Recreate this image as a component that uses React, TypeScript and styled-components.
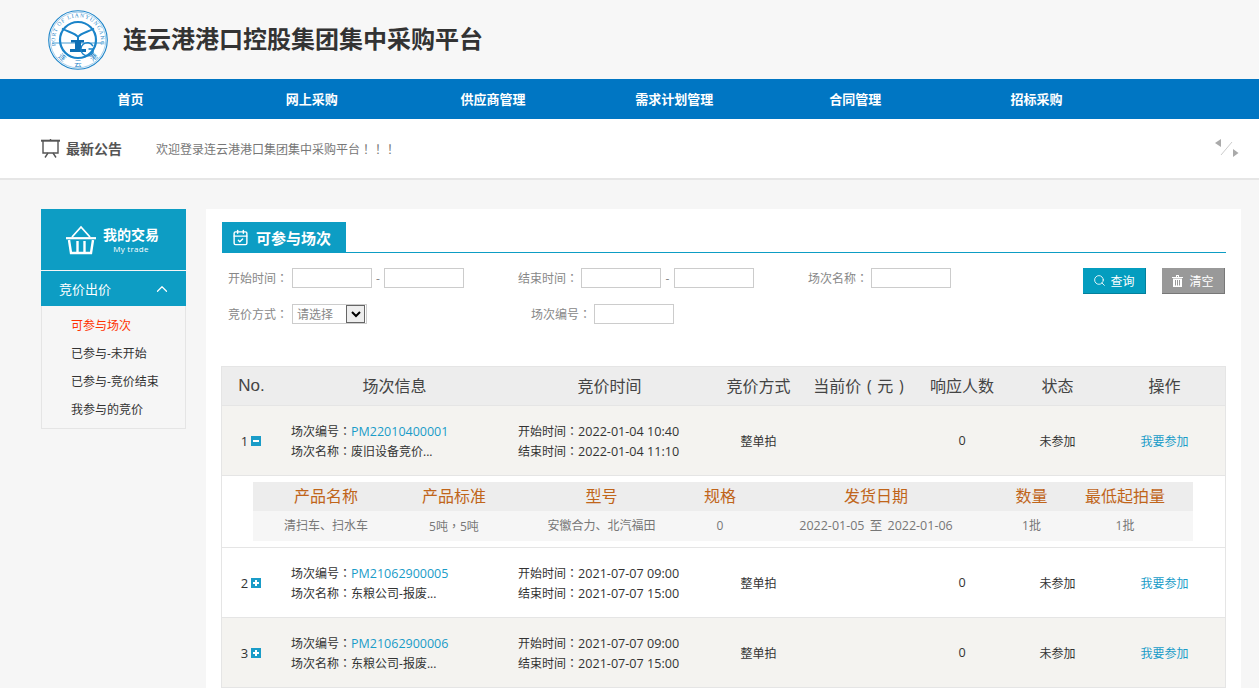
import React from 'react'
import styled, { createGlobalStyle } from 'styled-components'
import { CalendarCheck, ChevronUp, Search } from 'lucide-react'

const FONT = `"Open Sans", "Noto Sans CJK SC", sans-serif`

const GlobalStyle = createGlobalStyle`
	html, body {
		margin: 0;
		padding: 0;
		height: 100%;
		overflow: hidden;
		background: #f6f6f6;
		font-family: ${FONT};
		font-size: 12px;
		color: #333;
	}
	* {
		box-sizing: border-box;
	}
`

const NAV = ['首页', '网上采购', '供应商管理', '需求计划管理', '合同管理', '招标采购']
const MENU = ['可参与场次', '已参与-未开始', '已参与-竞价结束', '我参与的竞价']

const ROWS = [
	{ no: 1, code: 'PM22010400001', name: '废旧设备竞价...', start: '2022-01-04 10:40', end: '2022-01-04 11:10', open: true, shaded: true },
	{ no: 2, code: 'PM21062900005', name: '东粮公司-报废...', start: '2021-07-07 09:00', end: '2021-07-07 15:00', open: false, shaded: false },
	{ no: 3, code: 'PM21062900006', name: '东粮公司-报废...', start: '2021-07-07 09:00', end: '2021-07-07 15:00', open: false, shaded: true },
]

function Logo() {
	const c = '#1b84c9'
	return (
		<svg width='60' height='60' viewBox='0 0 60 60'>
			<defs>
				<path id='logoTop' d='M8.3 37 A22.8 22.8 0 1 1 51.7 37' />
			</defs>
			<circle cx='30' cy='30' r='29.3' fill='#fff' stroke={c} strokeWidth='1.1' />
			<circle cx='30' cy='30' r='27.8' fill='none' stroke={c} strokeWidth='0.4' />
			<text fontSize='5.6' fill={c} fontFamily='"Liberation Serif", serif' letterSpacing='0.9'>
				<textPath href='#logoTop' startOffset='50%' textAnchor='middle'>
					PORT OF LIANYUNGANG
				</textPath>
			</text>
			<LogoChar x='30' y='56' transform='rotate(42 30 30)'>连</LogoChar>
			<LogoChar x='30' y='56'>云</LogoChar>
			<LogoChar x='30' y='56' transform='rotate(-42 30 30)'>港</LogoChar>
			<circle cx='30' cy='30' r='18' fill='none' stroke={c} strokeWidth='2.2' />
			<rect x='4' y='32.6' width='52' height='0.8' fill={c} />
			<path d='M14 18.5 C20 22 27 23 30 27 C33 23 40 22 46 18.5' fill='none' stroke={c} strokeWidth='2' />
			<path d='M30 26 V30' stroke={c} strokeWidth='2' />
			<path d='M23 30 H36 V32.5 H33 V39 H38 V42 H22 V39 H27 V32.5 H23 Z' fill='#0f6fb4' />
			<path d='M45 36 A6.5 6.5 0 1 0 45 42.5 V39 H40.5' fill='none' stroke={c} strokeWidth='1.5' />
		</svg>
	)
}

function BoardIcon() {
	return (
		<svg width='19' height='19' viewBox='0 0 19 19' fill='none' stroke='#555' strokeWidth='1.4'>
			<path d='M0 1.7 H19' strokeWidth='2' />
			<path d='M2 2 V14 H17 V2' />
			<path d='M9.5 0 V2 M7 14 L4 18.5 M12 14 L15 18.5' />
		</svg>
	)
}

function PagerIcon() {
	return (
		<svg width='24' height='19' viewBox='0 0 24 19'>
			<path d='M6 0 V8 L0 4 Z M18 10 V18 L23.5 14 Z' fill='#aaa' />
			<path d='M17 3 L6 16' stroke='#ccc' strokeWidth='1' />
		</svg>
	)
}

function BasketIcon() {
	return (
		<svg width='30' height='30' viewBox='0 0 30 30' fill='none' stroke='#fff'>
			<path d='M6 12 L15 2 L24 12' strokeWidth='1.8' />
			<path d='M0 13.2 H30' strokeWidth='2.2' />
			<path d='M3 15 L5 28 H25 L27 15' strokeWidth='2.4' />
			<path d='M11.5 16 V27 M18.5 16 V27' strokeWidth='2.4' />
		</svg>
	)
}

function TrashIcon() {
	return (
		<svg width='11' height='12' viewBox='0 0 11 12' fill='#fff'>
			<path d='M0 2 H11 V3 H0 Z M4 0 H7 V2 H6 V1 H5 V2 H4 Z' />
			<path d='M1 3.5 H10 V12 H1 Z M3 5 V10.5 H4 V5 Z M5 5 V10.5 H6 V5 Z M7 5 V10.5 H8 V5 Z' fillRule='evenodd' />
		</svg>
	)
}

export default function App() {
	return (
		<Page>
			<GlobalStyle />
			<Header>
				<Logo />
				<Title>连云港港口控股集团集中采购平台</Title>
			</Header>
			<Nav>
				{NAV.map(item => (
					<NavItem key={item}>{item}</NavItem>
				))}
			</Nav>
			<Notice>
				<BoardIcon />
				<NoticeTitle>最新公告</NoticeTitle>
				<NoticeText>
					欢迎登录连云港港口集团集中采购平台<Punct>！！！</Punct>
				</NoticeText>
				<PagerIcon />
			</Notice>
			<Body>
				<Sidebar>
					<SideHead>
						<BasketIcon />
						<SideHeadText>
							<strong>我的交易</strong>
							<small>My trade</small>
						</SideHeadText>
					</SideHead>
					<SideGroup>
						竞价出价
						<ChevronUp size={18} strokeWidth={1.6} />
					</SideGroup>
					<SideMenu>
						{MENU.map((item, i) => (
							<SideItem key={item} $active={i === 0}>
								{item}
							</SideItem>
						))}
					</SideMenu>
				</Sidebar>
				<Panel>
					<TabBar>
						<Tab>
							<CalendarCheck size={17} strokeWidth={2} />
							可参与场次
						</Tab>
					</TabBar>
					<Filters>
						<FilterForm>
							<FilterRow>
								<Field>
									<Label>开始时间<Punct>：</Punct></Label>
									<TextInput />
									<Dash>-</Dash>
									<TextInput />
								</Field>
								<Field>
									<Label>结束时间<Punct>：</Punct></Label>
									<TextInput />
									<Dash>-</Dash>
									<TextInput />
								</Field>
								<Field>
									<Label>场次名称<Punct>：</Punct></Label>
									<TextInput />
								</Field>
							</FilterRow>
							<FilterRow>
								<Field>
									<Label>竞价方式<Punct>：</Punct></Label>
									<SelectBox>
										请选择
										<SelectArrow>
											<svg width='10' height='7' viewBox='0 0 10 7' fill='none' stroke='#000' strokeWidth='2'>
												<path d='M1 1 L5 5 L9 1' />
											</svg>
										</SelectArrow>
									</SelectBox>
								</Field>
								<Field $indent>
									<Label>场次编号<Punct>：</Punct></Label>
									<TextInput />
								</Field>
							</FilterRow>
						</FilterForm>
						<Buttons>
							<ActionButton $tone='#049dbf' $edge='#03809c'>
								<Search size={13} strokeWidth={1.6} />
								查询
							</ActionButton>
							<ActionButton $tone='#999' $edge='#777'>
								<TrashIcon />
								<span>清空</span>
							</ActionButton>
						</Buttons>
					</Filters>
					<Table>
						<HeadRow>
							<NoHead>No.</NoHead>
							<HeadCell>场次信息</HeadCell>
							<HeadCell>竞价时间</HeadCell>
							<HeadCell>竞价方式</HeadCell>
							<PriceHead>当前价 ( 元 )</PriceHead>
							<HeadCell>响应人数</HeadCell>
							<HeadCell>状态</HeadCell>
							<ActionHead>操作</ActionHead>
						</HeadRow>
						{ROWS.map(row => (
							<React.Fragment key={row.no}>
								<Row $shaded={row.shaded}>
									<NoCell>
										{row.no}
										<Toggle $open={row.open} />
									</NoCell>
									<InfoCell>
										<InfoLine>
											场次编号<Punct>：</Punct><CodeLink>{row.code}</CodeLink>
										</InfoLine>
										<InfoLine>
											场次名称<Punct>：</Punct>{row.name}
										</InfoLine>
									</InfoCell>
									<InfoCell>
										<InfoLine>
											开始时间<Punct>：</Punct><Num>{row.start}</Num>
										</InfoLine>
										<InfoLine>
											结束时间<Punct>：</Punct><Num>{row.end}</Num>
										</InfoLine>
									</InfoCell>
									<Cell>整单拍</Cell>
									<Cell />
									<Cell>
										<Num>0</Num>
									</Cell>
									<Cell>未参加</Cell>
									<ActionCell>
										<JoinLink>我要参加</JoinLink>
									</ActionCell>
								</Row>
								{row.open && (
									<DetailWrap>
										<DetailHead>
											<span>产品名称</span>
											<span>产品标准</span>
											<span>型号</span>
											<span>规格</span>
											<span>发货日期</span>
											<span>数量</span>
											<span>最低起拍量</span>
										</DetailHead>
										<DetailBody>
											<span>清扫车、扫水车</span>
											<span>
												5吨<Punct>，</Punct>5吨
											</span>
											<span>安徽合力、北汽福田</span>
											<span>0</span>
											<DateRange>2022-01-05 至 2022-01-06</DateRange>
											<span>1批</span>
											<span>1批</span>
										</DetailBody>
									</DetailWrap>
								)}
							</React.Fragment>
						))}
					</Table>
				</Panel>
			</Body>
		</Page>
	)
}

const Page = styled.div`
	width: 1259px;
`
const LogoChar = styled.text`
	font-family: 'Noto Sans CJK SC', sans-serif;
	font-size: 7.4px;
	text-anchor: middle;
	fill: #1b84c9;
`
const Punct = styled.span`
	font-family: 'Noto Sans CJK TC', sans-serif;
`
const Header = styled.header`
	height: 79px;
	background: #f7f7f7;
	display: flex;
	align-items: center;
	padding-left: 48px;
`
const Title = styled.h1`
	margin: 0 0 2px 15px;
	font-size: 24px;
	line-height: 1;
	font-weight: 700;
	color: #333;
`
const Nav = styled.nav`
	height: 40px;
	background: #0076c3;
	display: flex;
	padding-left: 40px;
`
const NavItem = styled.a`
	width: 181.2px;
	line-height: 40px;
	text-align: center;
	color: #fff;
	font-size: 13px;
	font-weight: 700;
`
const Notice = styled.div`
	height: 61px;
	background: #fff;
	border-bottom: 2px solid #e6e6e6;
	display: flex;
	align-items: center;
	padding: 0 20px 0 41px;
`
const NoticeTitle = styled.span`
	margin: 0 0 2px 6px;
	width: 90px;
	font-size: 14px;
	font-weight: 700;
	color: #555;
`
const NoticeText = styled.span`
	flex: 1;
	font-size: 12px;
	color: #777;
`
const Body = styled.main`
	display: flex;
	align-items: flex-start;
	padding: 29px 18px 0 41px;
`
const Sidebar = styled.aside`
	width: 145px;
	margin-right: 20px;
`
const SideHead = styled.div`
	height: 61px;
	background: #0d9dc4;
	display: flex;
	align-items: center;
	padding-left: 25px;
	color: #fff;
`
const SideHeadText = styled.div`
	margin-left: 7px;
	display: flex;
	flex-direction: column;
	align-items: center;
	strong {
		font-size: 14px;
		line-height: 18px;
	}
	small {
		font-size: 8px;
		line-height: 10px;
		letter-spacing: 0.3px;
	}
`
const SideGroup = styled.div`
	height: 35px;
	margin-top: 1px;
	background: #0d9dc4;
	color: #fff;
	font-size: 13px;
	display: flex;
	align-items: center;
	justify-content: space-between;
	padding: 0 15px 0 18px;
`
const SideMenu = styled.ul`
	margin: 0;
	padding: 6px 0 4px 29px;
	list-style: none;
	background: #f6f6f6;
	border: 1px solid #e5e5e5;
	border-top: 0;
`
const SideItem = styled.li<{ $active: boolean }>`
	height: 28px;
	line-height: 28px;
	font-size: 12px;
	color: ${p => (p.$active ? '#ff3300' : '#333')};
`
const Panel = styled.section`
	width: 1035px;
	height: 480px;
	background: #fff;
	padding: 13px 15px 0;
`
const TabBar = styled.div`
	margin-left: 1px;
	height: 31px;
	border-bottom: 1px solid #0d9dc4;
`
const Tab = styled.div`
	width: 124px;
	height: 30px;
	background: #0d9dc4;
	color: #fff;
	font-size: 15px;
	font-weight: 700;
	display: flex;
	align-items: center;
	gap: 7px;
	padding-left: 10px;
`
const Filters = styled.div`
	display: flex;
	justify-content: space-between;
	padding: 15px 0 0 7px;
	height: 113px;
`
const FilterForm = styled.div`
	display: flex;
	flex-direction: column;
	gap: 16px;
`
const FilterRow = styled.div`
	display: flex;
	height: 20px;
`
const Field = styled.div<{ $indent?: boolean }>`
	width: 290px;
	display: flex;
	align-items: center;
	padding-left: ${p => (p.$indent ? '13px' : '0')};
	&:nth-child(3) {
		width: auto;
	}
`
const Label = styled.label`
	width: 63px;
	font-size: 12px;
	color: #888;
	${Field}:first-child & {
		width: 64px;
	}
`
const TextInput = styled.input`
	width: 80px;
	height: 20px;
	padding: 0;
	background: #fff;
	border: 1px solid #ccc;
`
const Dash = styled.span`
	width: 12px;
	text-align: center;
	color: #888;
	${Field}:nth-child(2) & {
		width: 13px;
	}
`
const SelectBox = styled.div`
	width: 75px;
	height: 20px;
	border: 1px solid #ccc;
	padding-left: 4px;
	font-size: 12px;
	color: #888;
	display: flex;
	align-items: center;
	justify-content: space-between;
`
const SelectArrow = styled.span`
	width: 19px;
	height: 18px;
	margin-right: 1px;
	background: #eee;
	border: 1px solid #666;
	display: flex;
	align-items: center;
	justify-content: center;
`
const Buttons = styled.div`
	display: flex;
	gap: 16px;
	margin-right: 1px;
`
const ActionButton = styled.button<{ $tone: string; $edge: string }>`
	width: 63px;
	height: 26px;
	padding: 0;
	border: 0;
	border-bottom: 1px solid ${p => p.$edge};
	border-right: 1px solid ${p => p.$edge};
	background: ${p => p.$tone};
	color: #fff;
	font-family: ${FONT};
	font-size: 12px;
	display: flex;
	align-items: center;
	justify-content: center;
	gap: 4px;
	span {
		margin-left: 2px;
	}
`
const Table = styled.div`
	width: 1005px;
	border: 1px solid #e5e5e5;
	border-bottom: 0;
`
const COL_WIDTHS = '59px 227px 203px 95px 105px 102px 89px 123px'
const HeadRow = styled.div`
	display: grid;
	grid-template-columns: ${COL_WIDTHS};
	height: 39px;
	padding-bottom: 3px;
	background: #ededed;
	border-bottom: 1px solid #e5e5e5;
`
const HeadCell = styled.div`
	display: flex;
	align-items: center;
	justify-content: center;
	font-size: 16px;
	color: #444;
`
const NoHead = styled(HeadCell)`
	padding-top: 2px;
	font-family: 'Liberation Sans', sans-serif;
	font-size: 17px;
`
const PriceHead = styled(HeadCell)`
	word-spacing: 1.5px;
`
const ActionHead = styled(HeadCell)`
	padding-left: 2px;
`
const Row = styled.div<{ $shaded: boolean }>`
	display: grid;
	grid-template-columns: ${COL_WIDTHS};
	height: 70px;
	background: ${p => (p.$shaded ? '#f4f3f0' : '#fff')};
	border-bottom: 1px solid #e5e5e5;
`
const Cell = styled.div`
	display: flex;
	align-items: center;
	justify-content: center;
	font-size: 12px;
	color: #333;
`
const ActionCell = styled(Cell)`
	padding-left: 2px;
`
const NoCell = styled(Cell)`
	font-size: 13px;
	gap: 3px;
	padding-right: 1px;
`
const Toggle = styled.i<{ $open: boolean }>`
	position: relative;
	width: 10px;
	height: 10px;
	background: #1a9cc8;
	&::before {
		content: '';
		position: absolute;
		left: 2px;
		top: 4px;
		width: 6px;
		height: 2px;
		background: #fff;
	}
	&::after {
		content: '';
		display: ${p => (p.$open ? 'none' : 'block')};
		position: absolute;
		left: 4px;
		top: 2px;
		width: 2px;
		height: 6px;
		background: #fff;
	}
`
const InfoCell = styled.div`
	display: flex;
	flex-direction: column;
	justify-content: center;
	padding-left: 10px;
`
const InfoLine = styled.div`
	height: 20px;
	font-size: 12px;
	line-height: 20px;
	color: #333;
`
const Num = styled.span`
	font-size: 12.6px;
`
const CodeLink = styled.a`
	font-size: 12.5px;
	color: #1a9cc8;
`
const JoinLink = styled.a`
	color: #1a9cc8;
`
const DETAIL_WIDTHS = '146px 110px 185px 52px 260px 51px 136px'
const DetailWrap = styled.div`
	height: 72px;
	padding: 6px 32px 0 31px;
	background: #fff;
	border-bottom: 1px solid #e5e5e5;
`
const DetailHead = styled.div`
	display: grid;
	grid-template-columns: ${DETAIL_WIDTHS};
	height: 29px;
	line-height: 29px;
	text-align: center;
	background: #ededed;
	font-size: 16px;
	color: #c0651a;
`
const DetailBody = styled.div`
	display: grid;
	grid-template-columns: ${DETAIL_WIDTHS};
	height: 30px;
	line-height: 30px;
	text-align: center;
	background: #f6f6f6;
	font-size: 12px;
	color: #777;
`
const DateRange = styled.span`
	font-size: 12.5px;
	word-spacing: 2px;
`
